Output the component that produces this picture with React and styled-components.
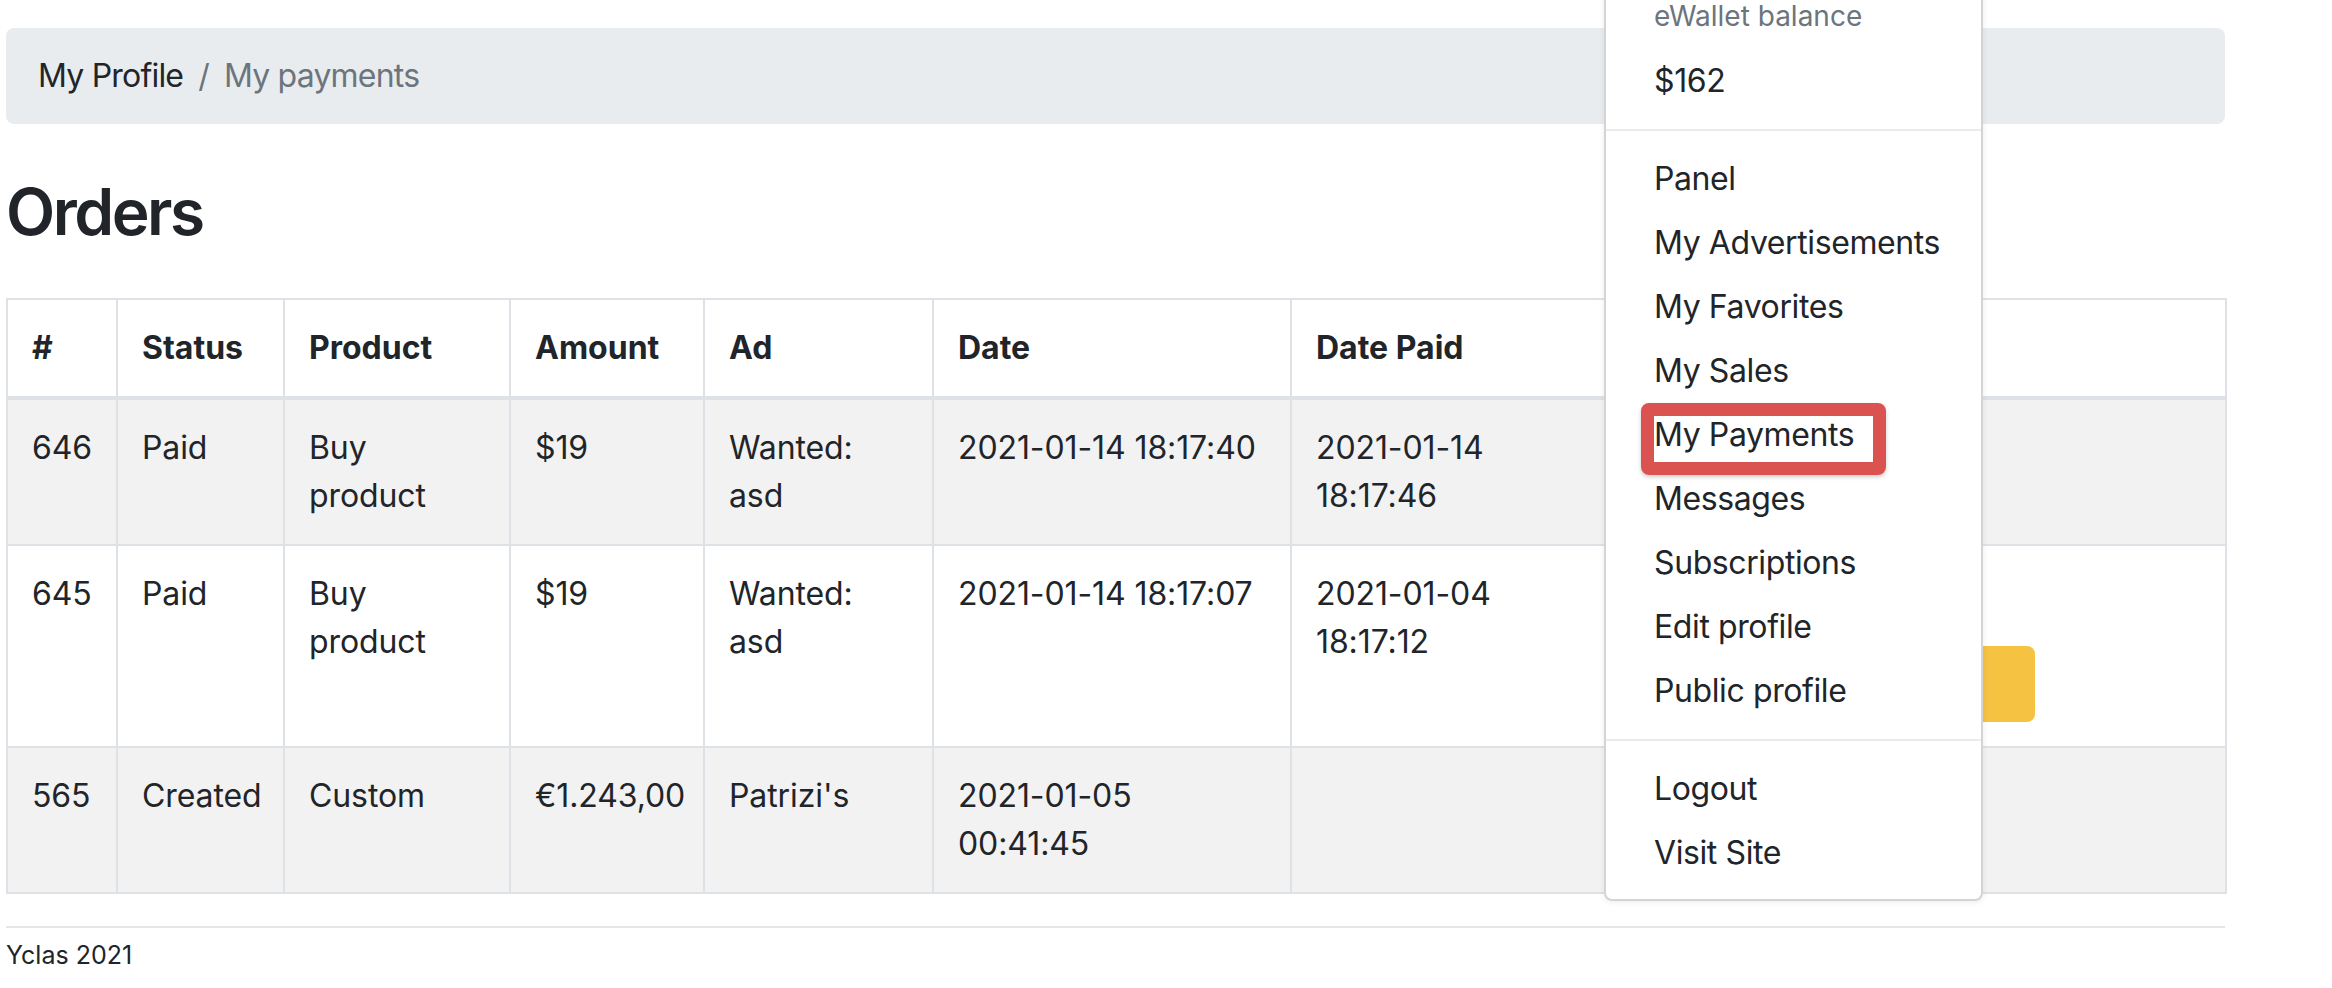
import React from 'react';
import styled, { createGlobalStyle } from 'styled-components';

const GlobalStyle = createGlobalStyle`
  * { box-sizing: border-box; }
  html, body { margin: 0; background: #fff; }
  body {
    font-family: Inter, "Liberation Sans", sans-serif;
    font-size: 32px;
    line-height: 48px;
    color: #212529;
    overflow: hidden;
  }
`;

const columns = [
  { label: '#', width: 110 },
  { label: 'Status', width: 167 },
  { label: 'Product', width: 226 },
  { label: 'Amount', width: 194 },
  { label: 'Ad', width: 229 },
  { label: 'Date', width: 358 },
  { label: 'Date Paid', width: 410 },
  { label: '', width: 525 },
];

const orders = [
  {
    cells: [['646'], ['Paid'], ['Buy', 'product'], ['$19'], ['Wanted:', 'asd'], ['2021-01-14 18:17:40'], ['2021-01-14', '18:17:46']],
    pay: false,
  },
  {
    cells: [['645'], ['Paid'], ['Buy', 'product'], ['$19'], ['Wanted:', 'asd'], ['2021-01-14 18:17:07'], ['2021-01-04', '18:17:12']],
    pay: true,
  },
  {
    cells: [['565'], ['Created'], ['Custom'], ['€1.243,00'], ["Patrizi's"], ['2021-01-05', '00:41:45'], []],
    pay: false,
  },
];

const menu = [
  'Panel',
  'My Advertisements',
  'My Favorites',
  'My Sales',
  'My Payments',
  'Messages',
  'Subscriptions',
  'Edit profile',
  'Public profile',
];

const Lines = ({ lines }) =>
  lines.map((line, i) => (
    <React.Fragment key={i}>
      {i > 0 && <br />}
      {line}
    </React.Fragment>
  ));

const App = () => {
  return (
    <Page>
      <GlobalStyle />
      <Container>
        <Breadcrumb>
          <Crumb>My Profile</Crumb>
          <Separator>/</Separator>
          <Crumb $active>My payments</Crumb>
        </Breadcrumb>

        <Title>Orders</Title>

        <Table>
          <colgroup>
            {columns.map((c, i) => (
              <Col key={i} $w={c.width} />
            ))}
          </colgroup>
          <thead>
            <tr>
              {columns.map((c, i) => (
                <Th key={i}>{c.label}</Th>
              ))}
            </tr>
          </thead>
          <tbody>
            {orders.map((order, r) => (
              <Row key={r} $striped={r % 2 === 0}>
                {order.cells.map((lines, c) => (
                  <Td key={c}>
                    <Lines lines={lines} />
                  </Td>
                ))}
                <Td>{order.pay && <PayButton />}</Td>
              </Row>
            ))}
          </tbody>
        </Table>

        <Footer>Yclas 2021</Footer>
      </Container>

      <Dropdown>
        <DropHeader>eWallet balance</DropHeader>
        <DropItem>$162</DropItem>
        <Divider />
        {menu.map((item) => (
          <DropItem key={item}>{item}</DropItem>
        ))}
        <Divider />
        <DropItem>Logout</DropItem>
        <DropItem>Visit Site</DropItem>
      </Dropdown>

      <Highlight />
    </Page>
  );
};

const Page = styled.div`
  position: relative;
  width: 2332px;
  height: 988px;
  overflow: hidden;
`;

const Container = styled.main`
  width: 2219px;
  margin-left: 6px;
  padding-top: 28px;
`;

const Breadcrumb = styled.ol`
  display: flex;
  margin: 0 0 32px;
  padding: 24px 32px;
  list-style: none;
  background: #e9ecef;
  border-radius: 8px;
  letter-spacing: -0.8px;
`;

const Crumb = styled.li`
  color: ${(props) => (props.$active ? '#6c757d' : '#212529')};
`;

const Separator = styled.li`
  padding: 0 15px;
  color: #6c757d;
`;

const Title = styled.h2`
  margin: 49px 0 48px;
  font-size: 64px;
  line-height: 77px;
  font-weight: 600;
  letter-spacing: -2.5px;
`;

const Table = styled.table`
  width: 100%;
  table-layout: fixed;
  border-collapse: collapse;
  margin-bottom: 32px;
  border: 2px solid #dee2e6;
`;

const Col = styled.col`
  width: ${(props) => props.$w}px;
`;

const Th = styled.th`
  padding: 24px;
  border: 2px solid #dee2e6;
  border-bottom-width: 4px;
  text-align: left;
  vertical-align: bottom;
  font-weight: 700;
`;

const Row = styled.tr`
  background: ${(props) => (props.$striped ? '#f2f2f2' : '#fff')};
`;

const Td = styled.td`
  padding: 24px;
  border: 2px solid #dee2e6;
  vertical-align: top;
  white-space: nowrap;
  letter-spacing: -0.1px;
`;

const PayButton = styled.span`
  display: block;
  width: 309px;
  height: 76px;
  margin-top: 76px;
  background: #f5c242;
  border-radius: 8px;
`;

const Footer = styled.footer`
  border-top: 2px solid #e6e6e6;
  padding-top: 9px;
  font-size: 25px;
  line-height: 36px;
`;

const Dropdown = styled.div`
  position: absolute;
  left: 1604px;
  top: -39px;
  width: 379px;
  padding: 16px 0 14px;
  background: #fff;
  border: 2px solid rgba(0, 0, 0, 0.17);
  border-radius: 8px;
  box-shadow: 0 1px 6px rgba(0, 0, 0, 0.08);
`;

const DropHeader = styled.div`
  padding: 16px 48px 12px;
  font-size: 28px;
  line-height: 42px;
  color: #6c757d;
`;

const DropItem = styled.a`
  display: block;
  padding: 8px 48px;
  color: #212529;
  text-decoration: none;
  white-space: nowrap;
  letter-spacing: -0.4px;
`;

const Divider = styled.hr`
  margin: 16px 0;
  border: 0;
  border-top: 2px solid #e9ecef;
`;

const Highlight = styled.div`
  position: absolute;
  left: 1641px;
  top: 403px;
  width: 245px;
  height: 72px;
  border: 13px solid #db5350;
  border-radius: 8px;
  box-shadow: 0 2px 4px rgba(0, 0, 0, 0.2);
`;

export default App;
